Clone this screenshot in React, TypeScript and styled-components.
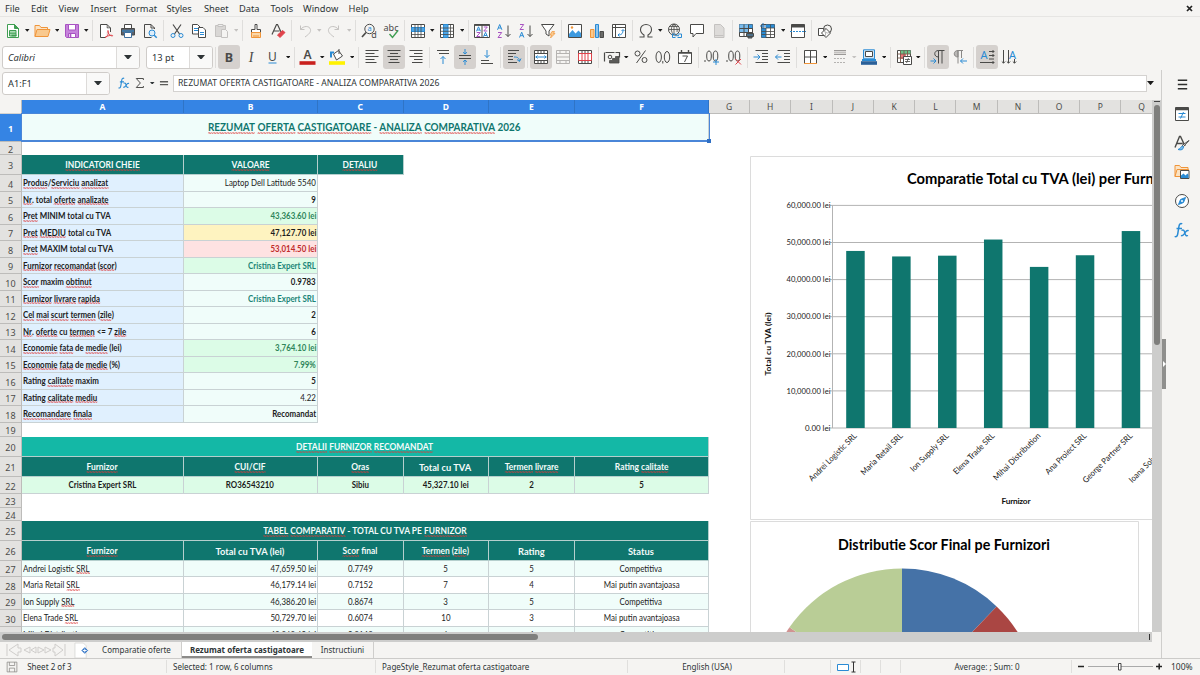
import React from "react";
import styled, { createGlobalStyle, css } from "styled-components";

const GlobalStyle = createGlobalStyle`
    * {
        box-sizing: border-box;
    }

    body {
        margin: 0;
        overflow: hidden;
        font-family: "Noto Sans", sans-serif;
        font-size: 9.3px;
        color: #2e3436;
    }
`;

const INK = "#4a4a48";
const BLUE = "#2a8bd4";
const RED = "#e0434b";
const ORANGE = "#f0953a";
const PURPLE = "#a852c2";
const GREEN = "#3f9e52";
const FAINT = "#c4c2c0";

/* ---------- window frame ---------- */

const Window = styled.div`
    width: 1200px;
    height: 675px;
    display: flex;
    flex-direction: column;
    background: #f5f4f2;
    overflow: hidden;
`;

const MenuBar = styled.div`
    display: flex;
    align-items: center;
    height: 17px;
    padding: 0 7px 0 5px;
    border-bottom: 1px solid #e6e5e3;
    flex: none;
`;

const MenuItem = styled.span<{ $w: number }>`
    width: ${(p) => p.$w}px;
    white-space: nowrap;
`;

const CloseDoc = styled.span`
    margin-left: auto;
    display: flex;
`;

const Toolbar = styled.div<{ $h: number; $left: number }>`
    display: flex;
    align-items: center;
    height: ${(p) => p.$h}px;
    padding-left: ${(p) => p.$left}px;
    flex: none;
`;

const ToolButton = styled.div<{ $active?: boolean }>`
    width: 22px;
    height: 24px;
    flex: none;
    display: flex;
    align-items: center;
    justify-content: center;
    border-radius: 3px;
    background: ${(p) => (p.$active ? "#d5d1ce" : "transparent")};
`;

const ArrowSlot = styled.div<{ $faint?: boolean }>`
    width: 7.5px;
    flex: none;
    display: flex;
    justify-content: center;
    color: ${(p) => (p.$faint ? "#c4c2c0" : "#1b1b1b")};
`;

const Sep = styled.div`
    width: 1px;
    height: 21px;
    margin: 0 2px;
    background: #dfdedc;
    flex: none;
`;

const Combo = styled.div<{ $w: number; $italic?: boolean }>`
    display: flex;
    align-items: stretch;
    width: ${(p) => p.$w}px;
    height: 23px;
    border: 1px solid #cfccc9;
    border-radius: 3px;
    background: #fff;
    font-style: ${(p) => (p.$italic ? "italic" : "normal")};
    overflow: hidden;
    flex: none;
`;

const SizeCombo = styled(Combo)`
    margin: 0 0 0 6px;
`;

const ComboText = styled.div`
    flex: 1;
    padding-left: 5px;
    display: flex;
    align-items: center;
`;

const ComboArrow = styled.div`
    width: 23px;
    display: flex;
    align-items: center;
    justify-content: center;
    border-left: 1px solid #dddbd9;
    background: #f9f9f8;
`;

const Main = styled.div`
    display: flex;
    height: 588px;
    flex: none;
`;

const Work = styled.div`
    width: 1161px;
    display: flex;
    flex-direction: column;
`;

const FormulaBar = styled.div`
    height: 30px;
    display: flex;
    align-items: center;
    padding: 0 0 4px 2px;
    flex: none;
`;

const FormulaInput = styled.div`
    width: 974px;
    height: 17px;
    margin-left: 2px;
    padding-left: 4px;
    border: 1px solid #d4d2d0;
    background: #fff;
    font-size: 8.65px;
    line-height: 15px;
    white-space: nowrap;
`;

const FormulaTools = styled.div`
    display: flex;
    align-items: center;
    gap: 4px;
    width: 53px;
    margin-left: 8px;
`;

/* ---------- sidebar ---------- */

const Sidebar = styled.div`
    width: 39px;
    display: flex;
    border-left: 1px solid #cfcecc;
`;

const SidebarGrip = styled.div`
    width: 4px;
    height: 50px;
    margin-top: 269px;
    background: #8f8f8d;
    display: flex;
    align-items: center;
    color: #fff;
`;

const SidebarDeck = styled.div`
    width: 32px;
    display: flex;
    flex-direction: column;
    align-items: center;
    padding-top: 6px;
    gap: 13px;
`;

const MenuSlot = styled.div`
    height: 17px;
    display: flex;
    align-items: center;
`;

/* ---------- sheet ---------- */

const SheetFrame = styled.div`
    display: flex;
    height: 532px;
    flex: none;
`;

const SheetView = styled.div`
    position: relative;
    width: 1152px;
    background: #fff;
    overflow: hidden;
`;

const VScroll = styled.div`
    width: 9px;
    background: #cdcdcc;
    padding: 1px 1.5px;
`;

const VMark = styled.div`
    height: 1px;
    margin-bottom: 3px;
    background: #444;
`;

const VThumb = styled.div`
    height: 240px;
    border-radius: 3px;
    background: #7f7f7d;
`;

const HScroll = styled.div`
    width: 1152px;
    height: 10px;
    background: #cdcdcc;
    padding: 2px;
    display: flex;
    justify-content: space-between;
    flex: none;
`;

const HThumb = styled.div`
    width: 536px;
    height: 6px;
    border-radius: 3px;
    background: #7f7f7d;
`;

const HMark = styled.div`
    width: 1px;
    background: #333;
`;

const ColumnHeads = styled.div`
    display: flex;
    height: 14px;
`;

const ColumnHead = styled.div<{ $w: number; $on?: boolean; $corner?: boolean }>`
    width: ${(p) => p.$w}px;
    flex: none;
    border-right: 1px solid ${(p) => (p.$on ? "#2f74c6" : "#bdbcba")};
    border-bottom: 1px solid ${(p) => (p.$on ? "#2f74c6" : "#bdbcba")};
    background: ${(p) => (p.$on ? "#3584e4" : "#e3e2e0")};
    color: ${(p) => (p.$on ? "#fff" : "#4c4c4a")};
    font-weight: ${(p) => (p.$on ? 700 : 400)};
    font-size: 8.5px;
    line-height: 14px;
    text-align: center;

    ${(p) =>
        p.$corner &&
        css`
            background: #f5f4f2;
            border-bottom-color: #d4d3d1;
        `}
`;

const Row = styled.div<{ $h: number }>`
    display: flex;
    height: ${(p) => p.$h}px;
`;

const RowHead = styled.div<{ $on?: boolean }>`
    width: 22px;
    flex: none;
    display: flex;
    align-items: center;
    justify-content: center;
    padding-top: 2px;
    border-right: 1px solid #bdbcba;
    border-bottom: 1px solid #bdbcba;
    background: ${(p) => (p.$on ? "#3584e4" : "#e3e2e0")};
    color: ${(p) => (p.$on ? "#fff" : "#4c4c4a")};
    font-weight: ${(p) => (p.$on ? 700 : 400)};
    font-size: 9px;
`;

type Align = "left" | "center" | "right";

const CellBox = styled.div<{
    $w: number;
    $bg: string;
    $align: Align;
    $fg?: string;
    $bold?: boolean;
    $line: string;
    $drop: number;
}>`
    width: ${(p) => p.$w}px;
    flex: none;
    display: flex;
    align-items: center;
    justify-content: ${(p) =>
        p.$align === "left"
            ? "flex-start"
            : p.$align === "right"
              ? "flex-end"
              : "center"};
    padding: ${(p) => Math.max(p.$drop, 0)}px 1px
        ${(p) => Math.max(-p.$drop, 0)}px 0.5px;
    overflow: hidden;
    border-right: 1px solid ${(p) => p.$line};
    border-bottom: 1px solid ${(p) => p.$line};
    background: ${(p) => p.$bg};
    color: ${(p) => p.$fg ?? "#1c1c1c"};
    font-weight: ${(p) => (p.$bold ? 700 : 400)};
`;

const CellText = styled.span<{ $size: number; $sx: number; $align: Align }>`
    display: inline-block;
    font-family: Lato, "Liberation Sans", sans-serif;
    font-size: ${(p) => p.$size}px;
    line-height: 1.2;
    white-space: pre;
    transform: scaleX(${(p) => p.$sx});
    transform-origin: ${(p) => p.$align} center;
`;

const squiggle = `url("data:image/svg+xml,%3Csvg xmlns='http://www.w3.org/2000/svg' width='3' height='2'%3E%3Cpath d='M0 1.500L.8 .5 2.200 1.500 3 .8' fill='none' stroke='%23dd3838' stroke-width='.9'/%3E%3C/svg%3E")`;

const Misspelt = styled.span`
    position: relative;

    &::after {
        content: "";
        position: absolute;
        left: 0;
        right: 0;
        bottom: -0.3px;
        height: 2px;
        background: ${squiggle} repeat-x left top / 3px 2px;
    }
`;

const Selection = styled.div`
    position: absolute;
    left: 21px;
    top: 13px;
    width: 689px;
    height: 29px;
    border: 1px solid #4a86d8;
    border-bottom-width: 2px;
`;

const SelectionGrip = styled.div`
    position: absolute;
    right: -2px;
    bottom: -3px;
    width: 4px;
    height: 4px;
    background: #2f6fc4;
`;

const FloatingChart = styled.svg<{ $top: number }>`
    position: absolute;
    left: 750px;
    top: ${(p) => p.$top}px;
    font-family: Lato, "Liberation Sans", sans-serif;
`;

/* ---------- tabs and status ---------- */

const TabBar = styled.div`
    height: 16px;
    display: flex;
    align-items: stretch;
    padding-left: 5px;
    font-size: 8px;
    flex: none;
`;

const TabTools = styled.div`
    width: 87px;
    display: flex;
    align-items: center;
    gap: 7px;
`;

const Tab = styled.div<{ $w: number; $on?: boolean }>`
    width: ${(p) => p.$w}px;
    text-align: center;
    line-height: 15px;
    white-space: nowrap;
    background: ${(p) => (p.$on ? "#fff" : "transparent")};
    font-weight: ${(p) => (p.$on ? 700 : 400)};
    border-bottom: ${(p) => (p.$on ? "2px solid #8c8b89" : "none")};
    border-right: ${(p) => (p.$on ? "none" : "1px solid #cfcecc")};
`;

const StatusBar = styled.div`
    height: 16px;
    display: flex;
    align-items: center;
    border-top: 1px solid #cccbc9;
    font-size: 8.05px;
    flex: none;
`;

const StatusCell = styled.div<{ $w: number; $center?: boolean }>`
    width: ${(p) => p.$w}px;
    height: 13px;
    display: flex;
    align-items: center;
    justify-content: ${(p) => (p.$center ? "center" : "flex-start")};
    gap: 5px;
    padding-left: ${(p) => (p.$center ? 2 : 6)}px;
    border-right: 1px solid #e0dfdd;
    white-space: nowrap;
    flex: none;
`;

const Zoom = styled.div`
    display: flex;
    align-items: center;
    gap: 9px;
    padding-left: 5px;
    font-size: 8.5px;
`;

/* ---------- icons ---------- */

const IconSvg = styled.svg`
    overflow: visible;
    flex: none;
`;

const Svg: React.FC<{ children: React.ReactNode; s?: number }> = ({
    children,
    s = 16,
}) => (
    <IconSvg
        width={s}
        height={s}
        viewBox="0 0 16 16"
        fill="none"
        stroke={INK}
        strokeWidth="1"
    >
        {children}
    </IconSvg>
);

const Glyph: React.FC<{
    x: number;
    y: number;
    size: number;
    fill?: string;
    family?: string;
    weight?: number;
    italic?: boolean;
    w?: number;
    children: string;
}> = ({ x, y, size, fill = INK, family, weight, italic, w, children }) => (
    <text
        x={x}
        y={y}
        fontSize={size}
        fill={fill}
        stroke="none"
        textAnchor="middle"
        fontFamily={family ?? "Noto Sans, sans-serif"}
        fontWeight={weight ?? 400}
        fontStyle={italic ? "italic" : "normal"}
        textLength={w}
        lengthAdjust="spacingAndGlyphs"
    >
        {children}
    </text>
);

const Triangle: React.FC<{ w?: number }> = ({ w = 4.5 }) => (
    <svg width={w} height={w * 0.6} viewBox="0 0 10 6">
        <path d="M0 0h10L5 6z" fill="currentColor" />
    </svg>
);

const icons: Record<string, React.ReactNode> = {
    newSheet: (
        <>
            <path d="M2.5 1.5h7l4 4v9h-11z" stroke={GREEN} fill="#fff" />
            <path d="M9.5 1.5v4h4z" stroke={GREEN} fill={GREEN} />
            <path d="M4.5 7.500h6.500v5.500H4.500zM4.500 10.200H11" stroke={GREEN} fill="#a9dbb3" />
            <path d="M6.500 12.500h5" stroke={GREEN} strokeWidth="1.6" />
        </>
    ),
    folder: (
        <>
            <path d="M1 13.500v-11h4.500l1.500 2h6.500v2" stroke={ORANGE} fill="#fbe3c4" />
            <path d="M1 13.500l2-7h13l-2 7z" stroke={ORANGE} fill="#f9c98e" />
        </>
    ),
    save: (
        <>
            <path d="M1.5 1.5h13v13h-12l-1-1z" stroke={PURPLE} fill="#c683db" />
            <path d="M4.5 1.5h7v5.5h-7z" stroke={PURPLE} fill="#fff" />
            <path d="M4.5 10.5h7v4h-7z" stroke={PURPLE} fill="#fff" />
            <path d="M6.5 11v3" stroke={PURPLE} strokeWidth="1.6" />
        </>
    ),
    pdf: (
        <>
            <path d="M12.500 9V5L9 1.500H2.500v13h5M9 1.500V5h3.500" fill="none" />
            <path d="M3 2h5.500v3.500H12V9H8v5H3z" fill="#fff" stroke="none" />
            <path
                d="M7 14.500c3-1 4-5 3-7c-1 2 2 5.500 4.500 5.500c1-1.200-4-1-7.500 1.500z"
                stroke={RED}
                strokeWidth="1"
            />
        </>
    ),
    print: (
        <>
            <path d="M4.500 5.500v-4h7v4" fill="#fff" />
            <path d="M1.500 5.500h13v6.500h-13z" fill="#5b6470" />
            <path d="M4.500 9.500h7v5h-7z" fill="#fff" stroke="#3c6f9e" />
            <path d="M2 8h12" stroke={BLUE} />
        </>
    ),
    preview: (
        <>
            <path d="M12.500 6V5L9 1.500H2.500v13h7M9 1.500V5h3.500" />
            <circle cx="10" cy="10" r="3" stroke={BLUE} fill="#dcedfa" />
            <path d="M12.200 12.200l2.500 2.500" stroke={BLUE} strokeWidth="1.500" />
        </>
    ),
    cut: (
        <>
            <path d="M4 1.500l6.500 9.500M12 1.500L5.500 11" strokeWidth="1.200" />
            <circle cx="4" cy="12.500" r="2" stroke={BLUE} />
            <circle cx="12" cy="12.500" r="2" stroke={BLUE} />
        </>
    ),
    copy: (
        <>
            <path d="M1.500 1.500h5l2.500 2.500v7h-7.500z" fill="#fff" />
            <path d="M7.500 4.500h4.500l2.500 2.500v7.500H7.500z" fill="#fff" />
            <path d="M3 5.500h4M3 7.500h4M9 9.500h4M9 11.500h4" stroke={BLUE} />
        </>
    ),
    paste: (
        <>
            <path d="M2.500 2.500h10v11h-10z" stroke={FAINT} fill="#d9d7d5" />
            <path d="M5 1.500h5v2H5z" stroke={FAINT} fill="#eee" />
            <path d="M8.500 6.500h4l2 2v6h-6z" stroke={FAINT} fill="#f5f4f2" />
        </>
    ),
    brush: (
        <>
            <path d="M7 1.500h2v5h3.500v3h-9v-3H7z" fill="#fff" />
            <path d="M3.500 9.500h9v5h-9z" fill="#fbd7a8" stroke={ORANGE} />
            <path d="M6 12v2M8 12v2M10 12v2" stroke={ORANGE} />
        </>
    ),
    clear: (
        <>
            <path d="M2 11.500L6.500 1.500h1L11 9M3.500 8h6" strokeWidth="1.200" />
            <path d="M7.500 12l5-4.500 2.500 2-5 5z" stroke={RED} fill={RED} />
        </>
    ),
    undo: (
        <path
            d="M3.500 2.500v4h4M3.500 6.500c3-4 9-4 10 0 .500 3-2 5-5.500 7.500"
            stroke={FAINT}
        />
    ),
    redo: (
        <path
            d="M12.500 2.500v4h-4M12.500 6.500c-3-4-9-4-10 0-.500 3 2 5 5.500 7.500"
            stroke={FAINT}
        />
    ),
    find: (
        <>
            <circle cx="8.500" cy="6" r="4.700" />
            <path d="M5 9.500l-4 4.500" strokeWidth="1.700" />
            <Glyph x={8.500} y={8.300} size={7.500} fill={BLUE}>a</Glyph>
            <Glyph x={13} y={15} size={9}>d</Glyph>
        </>
    ),
    spell: (
        <>
            <Glyph x={8} y={7.500} size={9} w={15}>abc</Glyph>
            <path d="M6.500 11l3 3.500 5.500-7" stroke={GREEN} strokeWidth="1.400" />
        </>
    ),
    gridRow: (
        <>
            <path d="M1.500 1.500h13v13h-13z" fill="#fff" />
            <path d="M1.500 4.500h13v4h-13z" fill="#4ea6e6" stroke={BLUE} />
            <path d="M5 1.500v13M8 1.500v13M11 1.500v13M1.500 11.500h13" strokeWidth=".8" />
        </>
    ),
    gridCol: (
        <>
            <path d="M1.500 1.500h13v13h-13z" fill="#fff" />
            <path d="M4.500 1.500h4.500v13h-4.500z" fill="#4ea6e6" stroke={BLUE} />
            <path d="M11.500 1.500v13M1.500 5h13M1.500 8.300h13M1.500 11.500h13" strokeWidth=".8" />
        </>
    ),
    sort: (
        <>
            <path d="M.5 1.500h15v13H.5zM8 1.500v13" fill="#fff" />
            <path d="M.5 2h15" strokeWidth="1.800" />
            <path d="M2.500 8.300L4.500 3.800l2 4.500M3.200 7h2.600M9.500 13.800l2-4.500 2 4.500M10.200 12.500h2.600" stroke={BLUE} />
            <path d="M2.700 9.500h3.500L2.700 13.500h3.500M9.800 4h3.500L9.800 8h3.500" stroke={PURPLE} />
        </>
    ),
    sortAsc: (
        <>
            <path d="M1.500 6.800L3.700 1.500l2.200 5.300M2.300 5h2.800" stroke={BLUE} />
            <path d="M2 9.500h3.700L2 14.500h3.700" stroke={PURPLE} />
            <path d="M12 2.500v11M9.500 11l2.500 2.500 2.500-2.500" />
        </>
    ),
    sortDesc: (
        <>
            <path d="M2 1.500h3.700L2 6.500h3.700" stroke={PURPLE} />
            <path d="M1.500 14.500l2.200-5.300 2.200 5.300M2.300 12.700h2.800" stroke={BLUE} />
            <path d="M12 2.500v11M9.500 11l2.500 2.500 2.500-2.500" />
        </>
    ),
    filter: (
        <>
            <path d="M1.500 1.500h12.500l-5 6.500v5l-3-2V8z" fill="#fff" />
            <path d="M12 8.500h2.500l-1 2h1.500l-4.500 4.500 1-3h-1.500z" stroke={ORANGE} fill="#f9c98e" strokeWidth=".7" />
        </>
    ),
    image: (
        <>
            <path d="M1.500 1.500h13v13h-13z" fill="#fff" />
            <path d="M2 14v-3l3.500-4 3 3.500 3-3 2.500 2.500v4z" fill="#3d9ae0" stroke="none" />
            <circle cx="5" cy="4.500" r="1.200" fill={ORANGE} stroke="none" />
        </>
    ),
    chart: (
        <>
            <path d="M1.500 6.500h3.500v8H1.500z" stroke={ORANGE} fill="#f9c98e" />
            <path d="M6.500 1.500h3v13h-3z" stroke={BLUE} fill="#8fc5ee" />
            <path d="M11 8.500h3.500v6H11z" fill="#6b6b69" />
        </>
    ),
    pivot: (
        <>
            <path d="M1.500 1.500h13v13h-13zM1.500 4.500h13M4.500 1.500v13" fill="#fff" />
            <path d="M7 12c4 0 5-2 5-5M10.500 8L12 6.500 13.500 8M8.500 10.500L7 12l1.500 1.500" stroke={BLUE} />
        </>
    ),
    omega: (
        <path
            d="M1.500 14h4.500v-2C3.500 10.500 2.500 9 2.500 6.500 2.500 3.500 5 1.500 8 1.500s5.500 2 5.500 5c0 2.500-1 4-3.500 5.500v2h4.500"
            strokeWidth="1.100"
        />
    ),
    globe: (
        <>
            <circle cx="7" cy="6.500" r="5.500" />
            <path d="M1.500 6.500h11M2.500 3.500h9M7 1v10M7 1C3.500 3.500 3.500 9 7 12M7 1c3 2.500 3.500 5 3 8" strokeWidth=".8" />
            <path d="M8.500 14.500H5.500v-3.500h3M10.500 11h4v3.500h-4M7.500 12.700h4.500" stroke={BLUE} />
        </>
    ),
    comment: <path d="M1.500 1.500h13v9h-7.500L4 14v-3.500H1.500z" fill="#fff" />,
    headerFooter: (
        <path d="M3.500 1.500h6l3.500 3.500v9.500h-9.500zM3.500 12.500h9" stroke={FAINT} fill="#dddbd9" />
    ),
    printArea: (
        <>
            <path d="M1.500 1.500h13v12h-13z" fill="#fff" />
            <path d="M1.500 1.500h13v4h-13z" fill="#3d9ae0" stroke="none" />
            <path d="M1.500 1.500h9v8h-9z" fill="#79bbec" stroke="none" />
            <path d="M1.500 5.500h13M1.500 9.500h13M6 1.500v12M10.500 1.500v12" />
            <path d="M8.500 10.500h7v3h-7zM10 13.500h4v1.500h-4z" fill="#4c7089" />
        </>
    ),
    freeze: (
        <>
            <path d="M1.500 1.500h13v13h-13z" fill="#fff" />
            <path d="M1.500 5h4.500v9.500H1.500z" fill={BLUE} stroke="none" />
            <path d="M6 1.500h8.500V5H6z" fill={BLUE} stroke="none" />
            <path d="M6 5v9.500M10.500 1.500v13M1.500 5h13M1.500 8.500h13M1.500 11.500h13" strokeWidth=".8" />
            <path d="M3 0v6M0 3h6" stroke="#1c6fb4" />
        </>
    ),
    split: (
        <>
            <path d="M1.500 1.500h13v13h-13z" fill="#fff" />
            <path d="M1.500 3h13" strokeWidth="3" />
            <path d="M0 8.500h16" stroke={BLUE} strokeDasharray="2 1" />
        </>
    ),
    shapes: (
        <>
            <path d="M1.500 5.500h7v7h-7z" fill="#fff" />
            <circle cx="10.500" cy="6" r="4" fill="#f5f4f2" fillOpacity=".6" />
            <path d="M9 5.500l4.500 4.500L9 14.500 4.500 10z" fill="#fff" fillOpacity=".6" />
        </>
    ),
    bold: <Glyph x={8} y={12.500} size={12.500} weight={700}>B</Glyph>,
    italic: (
        <Glyph x={8} y={12.500} size={14} italic family="Liberation Serif, serif">
            I
        </Glyph>
    ),
    underline: (
        <>
            <Glyph x={7.500} y={11.700} size={12}>U</Glyph>
            <path d="M3.500 14h8" stroke={BLUE} />
        </>
    ),
    fontColor: (
        <>
            <Glyph x={7.500} y={10} size={12} weight={600}>A</Glyph>
            <path d="M-.5 14h16" stroke="#c9211e" strokeWidth="3.600" />
        </>
    ),
    fill: (
        <>
            <path d="M4.500 5l5-3.500 4 5.500-6 4z" fill="#fff" />
            <path d="M2 8.500V3.500h3" stroke={BLUE} strokeWidth="2" />
            <path d="M10 0v5" />
            <path d="M0 14h16" stroke="#fff200" strokeWidth="3.600" />
        </>
    ),
    alignLeft: <path d="M1.500 1.500h13M1.500 4.500h9M1.500 7.500h13M1.500 10.500h9M1.500 13.500h11" />,
    alignCenter: <path d="M1.500 1.500h13M4 4.500h8M1.500 7.500h13M4 10.500h8M2.500 13.500h11" />,
    alignRight: <path d="M1.500 1.500h13M6 4.500h8.500M1.500 7.500h13M6 10.500h8.500M4 13.500h10.500" />,
    vTop: (
        <>
            <path d="M2 1.500h12M4 4.500h10" />
            <path d="M8 15V7.500M5.500 10L8 7.500l2.500 2.500" stroke={BLUE} />
        </>
    ),
    vMiddle: (
        <>
            <path d="M2 6.500h12M2 9.500h12" />
            <path d="M8 0v5M6 3.200l2 1.800 2-1.800M8 16v-5M6 12.800L8 11l2 1.800" stroke={BLUE} />
        </>
    ),
    vBottom: (
        <>
            <path d="M2 11.500h8M2 14.500h12" />
            <path d="M8 1v7.500M5.500 6L8 8.500 10.500 6" stroke={BLUE} />
        </>
    ),
    wrap: (
        <>
            <path d="M2 1.500h11M2 4.500h8M2 7.500h5M2 10.500h5M2 13.500h9" />
            <path d="M8 8c4 0 5 1 5.500 4M11 10.500l2.500 2 1.500-3" stroke={BLUE} />
        </>
    ),
    merge: (
        <>
            <path d="M1.500 1.500h13v13h-13zM1.500 4.500h13M1.500 11.500h13M5 1.500v3M8 1.500v3M11 1.500v3M5 11.500v3M8 11.500v3M11 11.500v3" fill="#fff" />
            <path d="M2.500 8h11M4.500 6.500L3 8l1.500 1.500M11.500 6.500L13 8l-1.500 1.500" stroke={BLUE} />
        </>
    ),
    mergeOff: (
        <path d="M1.500 1.500h13v13h-13zM1.500 4.500h13M1.500 11.500h13M1.500 8h13M5 1.500v3M11 1.500v3M5 11.500v3M11 11.500v3" stroke="#b5b3b1" />
    ),
    unmerge: (
        <>
            <path d="M1.500 1.500h13v13h-13zM5 1.500v3M8 1.500v3M11 1.500v3M5 11.500v3M8 11.500v3M11 11.500v3" fill="#fff" />
            <path d="M1.500 4.500h13v7h-13zM5 4.500v7M8 4.500v7M11 4.500v7" stroke={RED} />
        </>
    ),
    currency: (
        <>
            <path d="M.5 12.500v-9h15v5" strokeWidth="1.200" strokeDasharray="9 1" />
            <circle cx="6" cy="8" r="1.800" />
            <path d="M5.500 14v-2.500h3V9.500h3V7.500h3.500V14z" fill="#5b5b59" strokeWidth=".8" />
        </>
    ),
    percent: (
        <>
            <circle cx="4.500" cy="4.500" r="2.500" />
            <circle cx="11.500" cy="11" r="2.500" />
            <path d="M12.500 1.500L3.500 14" />
        </>
    ),
    number: (
        <>
            <ellipse cx="3.700" cy="8" rx="2.700" ry="5.500" />
            <ellipse cx="12" cy="8" rx="2.700" ry="5.500" />
            <path d="M7.800 12v2.500" />
        </>
    ),
    date: (
        <>
            <path d="M1.500 3.500h13v11h-13z" fill="#fff" />
            <path d="M1.500 4h13M4.500 1v3M11.500 1v3" strokeWidth="1.400" />
            <path d="M5.500 7h5L7.500 13" />
        </>
    ),
    addDecimal: (
        <>
            <ellipse cx="5" cy="7" rx="2.300" ry="5" />
            <ellipse cx="11.500" cy="7" rx="2.300" ry="5" />
            <path d="M1 11v2" />
            <path d="M9 13h6M12 10v6" stroke={BLUE} />
        </>
    ),
    delDecimal: (
        <>
            <ellipse cx="5" cy="7" rx="2.300" ry="5" />
            <ellipse cx="11.500" cy="7" rx="2.300" ry="5" />
            <path d="M1 11v2" />
            <path d="M9.500 10l5.500 5.500M15 10l-5.500 5.500" stroke={RED} />
        </>
    ),
    indent: (
        <>
            <path d="M2.500 1.500H15M9 4.500h6M9 7.500h6M9 10.500h6M2.500 13.500H15" />
            <path d="M.5 8h6M4.500 5.500L7 8l-2.500 2.500" stroke={BLUE} />
        </>
    ),
    outdent: (
        <>
            <path d="M2.500 1.500H15M9 4.500h6M9 7.500h6M9 10.500h6M2.500 13.500H15" />
            <path d="M.5 8h6M3 5.500L.5 8 3 10.500" stroke={BLUE} />
        </>
    ),
    borders: (
        <>
            <path d="M2.500 14.500v-13h12v13M8.500 1.500V14M2.500 8h12" fill="#fff" />
            <path d="M2 14.500h13" stroke={ORANGE} />
        </>
    ),
    lineStyle: (
        <>
            <path d="M2 1.500h12M2 5.500h12" stroke="#9b9997" />
            <path d="M2 9.500h12M2 13.500h12" stroke="#b5b3b1" strokeDasharray="2 1" />
            <path d="M2 3.500h12" stroke="#c4c2c0" strokeWidth="2" />
        </>
    ),
    background: (
        <>
            <path d="M2.500 .8h11v9h-11z" stroke={BLUE} fill="#cfe5f7" />
            <path d="M4.500 2.500h7v5h-7z" fill="#fff" />
            <path d="M0 14h16" stroke="#2a6099" strokeWidth="3.600" />
            <path d="M1 11h14" stroke={BLUE} strokeWidth="2" />
        </>
    ),
    conditional: (
        <>
            <path d="M1.500 1.500h13v12h-13z" fill="#fff" />
            <path d="M4 1.500h10.500v3.500H4z" fill="#6cc48a" stroke="none" />
            <path d="M4 5h6v5H4z" fill="#ef7b7f" stroke="none" />
            <path d="M4.500 1.500v12M1.500 5h13M1.500 9h7M8 1.500V8M11.500 1.500v6" stroke="#7a5a4a" strokeWidth=".9" />
            <path d="M7.500 7.500h8v8h-8z" fill="#fff" />
            <path d="M9 10.500h5M9 12.500h5M12.500 9l-2 5" strokeWidth=".8" />
        </>
    ),
    ltr: (
        <>
            <path d="M8.500 14.500v-13M12 14.500v-13M14.500 1.500H8.500c-5 0-5 6.500 0 6.500" />
            <path d="M.5 12h5.500M3.500 9.500L6 12l-2.500 2.500" stroke={BLUE} />
        </>
    ),
    rtl: (
        <>
            <path d="M6 1.500c-5 0-5 6.500 0 6.500z" fill="#b9b7b5" stroke="#8a8886" />
            <path d="M6 14.500v-13M9.500 9v-7.500M11 1.500H6" stroke="#8a8886" />
            <path d="M8.500 12h6.500M11 9.500L8.500 12l2.500 2.500" stroke={BLUE} />
        </>
    ),
    textH: (
        <>
            <Glyph x={5} y={9.500} size={11} fill={BLUE}>A</Glyph>
            <path d="M10 2.500h5M10 6.500h5M10 10h5M1 13.500h14M13.500 1l1.500 1.500L13.500 4M13.500 5L15 6.500 13.500 8M13.500 12l1.500 1.500-1.500 1.500" />
        </>
    ),
    textV: (
        <>
            <Glyph x={11.500} y={9.500} size={11} fill={BLUE}>A</Glyph>
            <path d="M2.500 1v13M7.500 1v13M13.500 10v4M.8 12.500l1.700 1.700 1.700-1.700M5.800 12.500l1.700 1.700 1.700-1.700M11.800 12.500l1.700 1.700 1.700-1.700" />
        </>
    ),
    properties: (
        <>
            <path d="M1.500 1.500h13v13h-13z" fill="#fff" />
            <path d="M1.500 3h13" strokeWidth="2.500" />
            <path d="M4.500 7.500h7M4.500 11h7M9.500 6L6.500 12.500" stroke={BLUE} />
        </>
    ),
    styles: (
        <>
            <path d="M1 12.500L5.500 1.500h1L11 11M2.700 8.500h6" strokeWidth="1.400" />
            <path d="M15 5.500l-5.500 6-1.500-1z" fill="#fff" />
            <path d="M8.500 11c-1.500 0-2 3-4.500 3.500 3 1 5.500 0 5.500-2.500z" stroke={BLUE} fill="#7fbdec" />
        </>
    ),
    gallery: (
        <>
            <path d="M1 12.500v-11h4.500l1.500 2h7v2.500" stroke={ORANGE} fill="#fbe3c4" />
            <path d="M1 12.500l2-7h11.500v7z" stroke={ORANGE} fill="#fbe3c4" />
            <path d="M6.500 6.500h8.500v8H6.500z" fill="#fff" />
            <path d="M7 14v-2.500l2.500-2 2 2 2-2L14.500 11v3z" fill={BLUE} stroke="none" />
        </>
    ),
    navigator: (
        <>
            <circle cx="8" cy="8" r="6.500" fill="#fff" />
            <path d="M11.500 4.500L9.500 9.500l-5 2 2-5z" stroke={BLUE} fill={BLUE} />
            <circle cx="8" cy="8" r="1" fill="#fff" stroke="none" />
        </>
    ),
    fx: (
        <>
            <path
                d="M8.200 2c-1.600-1.200-2.800 0-3.200 2.200L3.700 12.200c-.4 2.200-1.500 3-3 2.100M2.500 6.500h5.500"
                stroke={BLUE}
                strokeWidth="1.500"
            />
            <path
                d="M7.500 8.500c2-1.200 2.700 0 3.300 2.300s1.400 3.700 3.200 2.700M14.700 8.700c-2.200-1-3 1-4 2.500s-2 3.300-3.700 2.200"
                stroke={BLUE}
                strokeWidth="1.400"
            />
        </>
    ),
    hamburger: <path d="M3 3.500h10M3 8h10M3 12.500h10" strokeWidth="1.700" stroke="#2e2e2c" />,
    sigma: <path d="M12.500 4V2H3l5.500 6L3 14h9.500v-2" strokeWidth="1.300" />,
    equals: <path d="M1.500 6h13M1.500 10.500h13" strokeWidth="2.200" stroke="#5c5c5a" />,
    floppy: <path d="M1.500 1.500h13v13h-13zM4.500 1.500v4.500h7v-4.500M4.500 14.500v-5h7v5" stroke="#8a8886" />,
    addSheet: (
        <>
            <path d="M1 0h9l3 3v13H1z" fill="#fff" stroke="#dcdbd9" />
            <path d="M11.500 5l3 3-3 3-3-3z" fill="#2a6fc4" stroke="#2a6fc4" />
            <path d="M11.500 6v4M9.500 8h4" stroke="#fff" />
        </>
    ),
};

// "v" is an arrow, "w" a disabled arrow, "|" a separator
const standardTools =
    "newSheet v folder v save v | pdf print preview | cut copy paste w | brush clear | undo w redo w | find spell | gridRow v gridCol v | sort sortAsc sortDesc filter | image chart pivot | omega v globe comment headerFooter | printArea freeze v split | shapes";
const formatTools =
    "*bold italic underline v | fontColor v fill v | alignLeft *alignCenter alignRight | vTop *vMiddle vBottom | *wrap | *merge mergeOff unmerge | currency v percent number date | addDecimal delDecimal | indent outdent | borders v lineStyle w background v | conditional v | *ltr rtl | *textH textV";

const Tools: React.FC<{ list: string }> = ({ list }) => (
    <>
        {list.split(" ").map((t, i) => {
            if (t === "|") return <Sep key={i} />;
            if (t === "v" || t === "w")
                return (
                    <ArrowSlot key={i} $faint={t === "w"}>
                        <Triangle />
                    </ArrowSlot>
                );
            return (
                <ToolButton key={i} $active={t.startsWith("*")}>
                    <Svg>{icons[t.replace("*", "")]}</Svg>
                </ToolButton>
            );
        })}
    </>
);

/* ---------- sheet data ---------- */

const columns: [string, number][] = [
    ["A", 162],
    ["B", 134],
    ["C", 85.5],
    ["D", 85.5],
    ["E", 86],
    ["F", 134],
    ["G", 41],
    ["H", 41.3],
    ["I", 41.5],
    ["J", 41.2],
    ["K", 41.3],
    ["L", 41.2],
    ["M", 41.3],
    ["N", 41.2],
    ["O", 41.3],
    ["P", 41.2],
    ["Q", 41.3],
];

const rowEdges = [
    114, 142, 155, 175, 192, 208, 225, 241, 258, 274, 291, 307, 324, 340, 357,
    373, 390, 406, 423, 437, 457, 477, 494, 508, 521, 541, 561, 577, 594, 610,
    627, 644,
];

interface CellData {
    t: string;
    bg: string;
    align?: Align;
    fg?: string;
    bold?: boolean;
    size?: number;
    sx?: number;
    span?: number;
    line?: string;
    drop?: number;
}

const TEAL = "#0f766e";
const MINT = "#f0fdfa";
const SKY = "#e0f0fe";
const LIME = "#dcfce7";
const LINE = "#c9d2d4";

const head = (t: string, size = 8.7, sx = 0.97, drop = 2): CellData => ({
    t,
    bg: TEAL,
    fg: "#f4fbfa",
    align: "center",
    bold: true,
    size,
    sx,
    drop,
    line: "#b5cfcd",
});

const tallHead = (t: string) => head(t, 10, 0.93, 0);

const pair = (
    label: string,
    value: string,
    bg = MINT,
    fg?: string,
    bold = true,
): CellData[] => [
    { t: label, bg: SKY, bold: true },
    { t: value, bg, fg, bold, align: "right" },
];

const offer = (bg: string, v: string[]): CellData[] =>
    v.map((t, i) => ({
        t,
        bg,
        align: i === 0 ? "left" : i === 1 ? "right" : "center",
    }));

const cells: Record<number, CellData[]> = {
    1: [
        {
            t: "~REZUMAT~ ~OFERTA~ ~CASTIGATOARE~ - ~ANALIZA~ ~COMPARATIVA~ 2026",
            bg: MINT,
            fg: "#0f766e",
            align: "center",
            bold: true,
            size: 11,
            sx: 0.902,
            span: 6,
            drop: -1,
        },
    ],
    3: [head("~INDICATORI CHEIE~"), head("~VALOARE~"), head("~DETALIU~")],
    4: pair("~Produs~/~Serviciu~ ~analizat~", "Laptop Dell Latitude 5540", MINT, undefined, false),
    5: pair("~Nr~. total ~oferte~ ~analizate~", "9"),
    6: pair("~Pret~ MINIM total cu TVA", "43,363.60 lei", LIME, "#2f855a"),
    7: pair("~Pret~ ~MEDIU~ total cu TVA", "47,127.70 lei", "#fef3c0"),
    8: pair("~Pret~ MAXIM total cu TVA", "53,014.50 lei", "#fee2e2", "#c02b2b"),
    9: pair("~Furnizor~ ~recomandat~ (~scor~)", "Cristina Expert SRL", LIME, "#1c8577"),
    10: pair("~Scor~ maxim ~obtinut~", "0.9783"),
    11: pair("~Furnizor~ ~livrare~ ~rapida~", "Cristina Expert SRL", MINT, "#1c8577"),
    12: pair("~Cel~ ~mai~ ~scurt~ ~termen~ (~zile~)", "2"),
    13: pair("~Nr~. ~oferte~ cu ~termen~ <= 7 ~zile~", "6"),
    14: pair("~Economie~ ~fata~ de ~medie~ (lei)", "3,764.10 lei", LIME, "#2f855a"),
    15: pair("~Economie~ ~fata~ de ~medie~ (%)", "7.99%", LIME, "#2f855a"),
    16: pair("Rating ~calitate~ maxim", "5"),
    17: pair("Rating ~calitate~ ~mediu~", "4.22", MINT, undefined, false),
    18: pair("~Recomandare~ ~finala~", "Recomandat"),
    20: [{ ...head("~DETALII~ ~FURNIZOR~ ~RECOMANDAT~"), bg: "#14b8a6", span: 6 }],
    21: [
        head("~Furnizor~"),
        head("~CUI/CIF~"),
        head("~Oras~"),
        tallHead("Total cu TVA"),
        head("~Termen~ ~livrare~"),
        head("Rating ~calitate~"),
    ],
    22: ["Cristina Expert SRL", "RO36543210", "Sibiu", "45,327.10 lei", "2", "5"].map(
        (t) => ({ t, bg: LIME, bold: true, align: "center" as Align }),
    ),
    25: [{ ...head("~TABEL~ ~COMPARATIV~ - TOTAL CU TVA PE ~FURNIZOR~"), span: 6 }],
    26: [
        head("~Furnizor~"),
        tallHead("Total cu TVA (lei)"),
        head("~Scor~ final"),
        head("~Termen~ (~zile~)"),
        tallHead("Rating"),
        tallHead("Status"),
    ],
    27: offer(MINT, ["Andrei Logistic ~SRL~", "47,659.50 lei", "0.7749", "5", "5", "Competitiva"]),
    28: offer("#fff", ["Maria Retail ~SRL~", "46,179.14 lei", "0.7152", "7", "4", "Mai putin avantajoasa"]),
    29: offer(MINT, ["Ion Supply ~SRL~", "46,386.20 lei", "0.8674", "3", "5", "Competitiva"]),
    30: offer("#fff", ["Elena Trade ~SRL~", "50,729.70 lei", "0.6074", "10", "3", "Mai putin avantajoasa"]),
    31: offer(MINT, ["Mihai Distributi", "43,363.60 lei", "0.9142", "6", "4", "Competitiva"]),
};

const Cell: React.FC<{ data: CellData; width: number }> = ({ data, width }) => {
    const align = data.align ?? "left";
    return (
        <CellBox
            $w={width}
            $bg={data.bg}
            $fg={data.fg}
            $bold={data.bold}
            $align={align}
            $line={data.line ?? LINE}
            $drop={data.drop ?? 1}
        >
            <CellText $size={data.size ?? 8.5} $sx={data.sx ?? 0.93} $align={align}>
                {data.t
                    .split("~")
                    .map((part, i) =>
                        i % 2 ? <Misspelt key={i}>{part}</Misspelt> : part,
                    )}
            </CellText>
        </CellBox>
    );
};

const Sheet = () => (
    <SheetView>
        <ColumnHeads>
            <ColumnHead $w={22} $corner />
            {columns.map(([name, w]) => (
                <ColumnHead key={name} $w={w} $on={name < "G"}>
                    {name}
                </ColumnHead>
            ))}
        </ColumnHeads>
        {rowEdges.slice(1).map((edge, i) => (
            <Row key={edge} $h={edge - rowEdges[i]}>
                <RowHead $on={i === 0}>{i + 1}</RowHead>
                {(cells[i + 1] ?? []).map((c, n) => (
                    <Cell key={n} data={c} width={c.span ? 687 : columns[n][1]} />
                ))}
            </Row>
        ))}
        <Selection>
            <SelectionGrip />
        </Selection>
        <BarChart />
        <PieChart />
    </SheetView>
);

/* ---------- charts ---------- */

const bars: [string, number, number][] = [
    ["Andrei Logistic SRL", 47659.5, 64],
    ["Maria Retail SRL", 46179.14, 55.5],
    ["Ion Supply SRL", 46386.2, 50.5],
    ["Elena Trade SRL", 50729.7, 54.5],
    ["Mihai Distribution", 43363.6, 63],
    ["Ana Proiect SRL", 46500, 54.5],
    ["George Partner SRL", 53014.5, 66.5],
    ["Ioana Solutions SRL", 0, 66],
];

const BarChart = () => (
    <FloatingChart $top={56} width="402" height="365" viewBox="750 156 402 365">
        <path d="M1153 156.500H750.500v363H1153" fill="#fff" stroke="#dcdcdc" />
        <text x="907" y="184" fontSize="14.800" fontWeight="700" fill="#000" textLength="271" lengthAdjust="spacingAndGlyphs">
            Comparatie Total cu TVA (lei) per Furnizor
        </text>
        {[0, 1, 2, 3, 4, 5, 6].map((k) => (
            <g key={k}>
                <path d={`M830 ${428 - k * 37.1}H1152`} stroke="#b3b3b3" />
                <text
                    x={k ? 786.5 : 805}
                    y={431 - k * 37.2}
                    fontSize="8.300"
                    fill="#222"
                    textLength={k ? 44 : 25.5}
                    lengthAdjust="spacingAndGlyphs"
                >
                    {k ? `${k}0,000.00 lei` : "0.00 lei"}
                </text>
            </g>
        ))}
        <path d="M832.500 205v223" stroke="#b3b3b3" />
        {bars.map(([name, v, len], i) => (
            <g key={name}>
                {v > 0 && (
                    <rect
                        x={846.2 + i * 45.92}
                        y={428 - v * 0.003715}
                        width="18.500"
                        height={v * 0.003715}
                        fill="#0f766e"
                    />
                )}
                <text
                    transform={`translate(${857.3 + i * 45.95} 436.500) rotate(-45)`}
                    textAnchor="end"
                    fontSize="8.300"
                    fill="#222"
                    textLength={len}
                    lengthAdjust="spacingAndGlyphs"
                >
                    {name}
                </text>
            </g>
        ))}
        <text x="1016" y="504" fontSize="8.300" fontWeight="700" textAnchor="middle" fill="#111" textLength="29">
            Furnizor
        </text>
        <text transform="translate(771 344) rotate(-90)" fontSize="8.300" fontWeight="700" textAnchor="middle" fill="#111" textLength="63">
            Total cu TVA (lei)
        </text>
    </FloatingChart>
);

const PIE = { x: 902, y: 705.5, r: 137 };

const slice = (from: number, to: number) => {
    const at = (deg: number) => {
        const a = (deg * Math.PI) / 180;
        return `${PIE.x + PIE.r * Math.sin(a)} ${PIE.y - PIE.r * Math.cos(a)}`;
    };
    return `M${PIE.x} ${PIE.y}L${at(from)}A${PIE.r} ${PIE.r} 0 0 1 ${at(to)}z`;
};

const PieChart = () => (
    <FloatingChart $top={421} width="402" height="111" viewBox="750 521 402 111">
        <path d="M750.500 640V521.500H1138.500V640" fill="#fff" stroke="#dcdcdc" />
        <text x="944" y="550" fontSize="14.800" fontWeight="700" textAnchor="middle" fill="#000" textLength="212" lengthAdjust="spacingAndGlyphs">
            Distributie Scor Final pe Furnizori
        </text>
        <path d={slice(0, 43.7)} fill="#4572a7" />
        <path d={slice(43.7, 85)} fill="#aa4643" />
        <path d={slice(-100, -55.2)} fill="#d19392" />
        <path d={slice(-55.2, 0)} fill="#b9cd96" />
    </FloatingChart>
);

/* ---------- app ---------- */

const menus: [string, number][] = [
    ["File", 26],
    ["Edit", 27.5],
    ["View", 32],
    ["Insert", 35],
    ["Format", 41],
    ["Styles", 37.5],
    ["Sheet", 35],
    ["Data", 31.5],
    ["Tools", 32.5],
    ["Window", 45.5],
    ["Help", 30],
];

const App = () => (
    <Window>
        <GlobalStyle />
        <MenuBar>
            {menus.map(([name, w]) => (
                <MenuItem key={name} $w={w}>
                    {name}
                </MenuItem>
            ))}
            <CloseDoc>
                <svg width="7" height="7" viewBox="0 0 7 7">
                    <path d="M1 1l5 5M6 1L1 6" stroke="#222" strokeWidth="1.700" />
                </svg>
            </CloseDoc>
        </MenuBar>
        <Toolbar $h={27} $left={1.5}>
            <Tools list={standardTools} />
        </Toolbar>
        <Toolbar $h={26} $left={2}>
            <Combo $w={138} $italic>
                <ComboText>Calibri</ComboText>
                <ComboArrow>
                    <Triangle w={8} />
                </ComboArrow>
            </Combo>
            <SizeCombo $w={67}>
                <ComboText>13 pt</ComboText>
                <ComboArrow>
                    <Triangle w={8} />
                </ComboArrow>
            </SizeCombo>
            <Sep />
            <Tools list={formatTools} />
        </Toolbar>
        <Main>
            <Work>
                <FormulaBar>
                    <Combo $w={108}>
                        <ComboText>A1:F1</ComboText>
                        <ComboArrow>
                            <Triangle w={8} />
                        </ComboArrow>
                    </Combo>
                    <FormulaTools>
                        <Svg s={12}>{icons.fx}</Svg>
                        <Svg s={12}>{icons.sigma}</Svg>
                        <Triangle />
                        <Svg s={10}>{icons.equals}</Svg>
                    </FormulaTools>
                    <FormulaInput>
                        REZUMAT OFERTA CASTIGATOARE - ANALIZA COMPARATIVA 2026
                    </FormulaInput>
                    <ArrowSlot>
                        <Triangle w={7} />
                    </ArrowSlot>
                </FormulaBar>
                <SheetFrame>
                    <Sheet />
                    <VScroll>
                        <VMark />
                        <VThumb />
                    </VScroll>
                </SheetFrame>
                <HScroll>
                    <HThumb />
                    <HMark />
                </HScroll>
                <TabBar>
                    <TabTools>
                        <svg width="62" height="14" viewBox="0 0 62 14" fill="none" stroke="#cfcdcb">
                            <path d="M2 1v12M13 1L4 7l9 6V9h3V5h-3zM25 4l-6 3 6 3zM31 4l-5 3 5 3zM33 4l6 3-6 3zM40 4l6 3-6 3zM50 1v4h-2v4h2v4l8-6zM60 1v12" />
                        </svg>
                        <Svg s={15}>{icons.addSheet}</Svg>
                    </TabTools>
                    <Tab $w={90}>Comparatie oferte</Tab>
                    <Tab $w={130} $on>
                        Rezumat oferta castigatoare
                    </Tab>
                    <Tab $w={62}>Instructiuni</Tab>
                </TabBar>
            </Work>
            <Sidebar>
                <SidebarGrip>
                    <svg width="4" height="6" viewBox="0 0 4 6">
                        <path d="M1 0l3 3-3 3z" fill="currentColor" />
                    </svg>
                </SidebarGrip>
                <SidebarDeck>
                    <MenuSlot>
                        <Svg s={15}>{icons.hamburger}</Svg>
                    </MenuSlot>
                    {["properties", "styles", "gallery", "navigator", "fx"].map((name) => (
                        <Svg key={name}>{icons[name]}</Svg>
                    ))}
                </SidebarDeck>
            </Sidebar>
        </Main>
        <StatusBar>
            <StatusCell $w={167}>
                <Svg s={12}>{icons.floppy}</Svg>
                <span>&nbsp;&nbsp;Sheet 2 of 3</span>
            </StatusCell>
            <StatusCell $w={209}>Selected: 1 row, 6 columns</StatusCell>
            <StatusCell $w={252}>PageStyle_Rezumat oferta castigatoare</StatusCell>
            <StatusCell $w={157} $center>
                English (USA)
            </StatusCell>
            <StatusCell $w={46} />
            <StatusCell $w={30}>
                <svg width="20" height="12" viewBox="0 0 20 12" fill="none">
                    <path d="M.5 3.500h11v6H.5z" stroke={BLUE} fill="#fff" />
                    <path d="M14.500 1h4M16.500 1v10M14.500 11h4" stroke="#333" />
                </svg>
            </StatusCell>
            <StatusCell $w={20} />
            <StatusCell $w={20} />
            <StatusCell $w={171} $center>
                Average: ; Sum: 0
            </StatusCell>
            <Zoom>
                <svg width="85" height="11" viewBox="0 0 85 11">
                    <path d="M1 5.500h6M79 5.500h6.500M82.200 2.500v6" stroke="#222" strokeWidth="1.500" />
                    <path d="M11 5.500h65" stroke="#aaa" />
                    <path d="M41.500 2.500h2.500v6.500h-2.500z" stroke="#444" fill="#fff" />
                </svg>
                <span>100%</span>
            </Zoom>
        </StatusBar>
    </Window>
);

export default App;
